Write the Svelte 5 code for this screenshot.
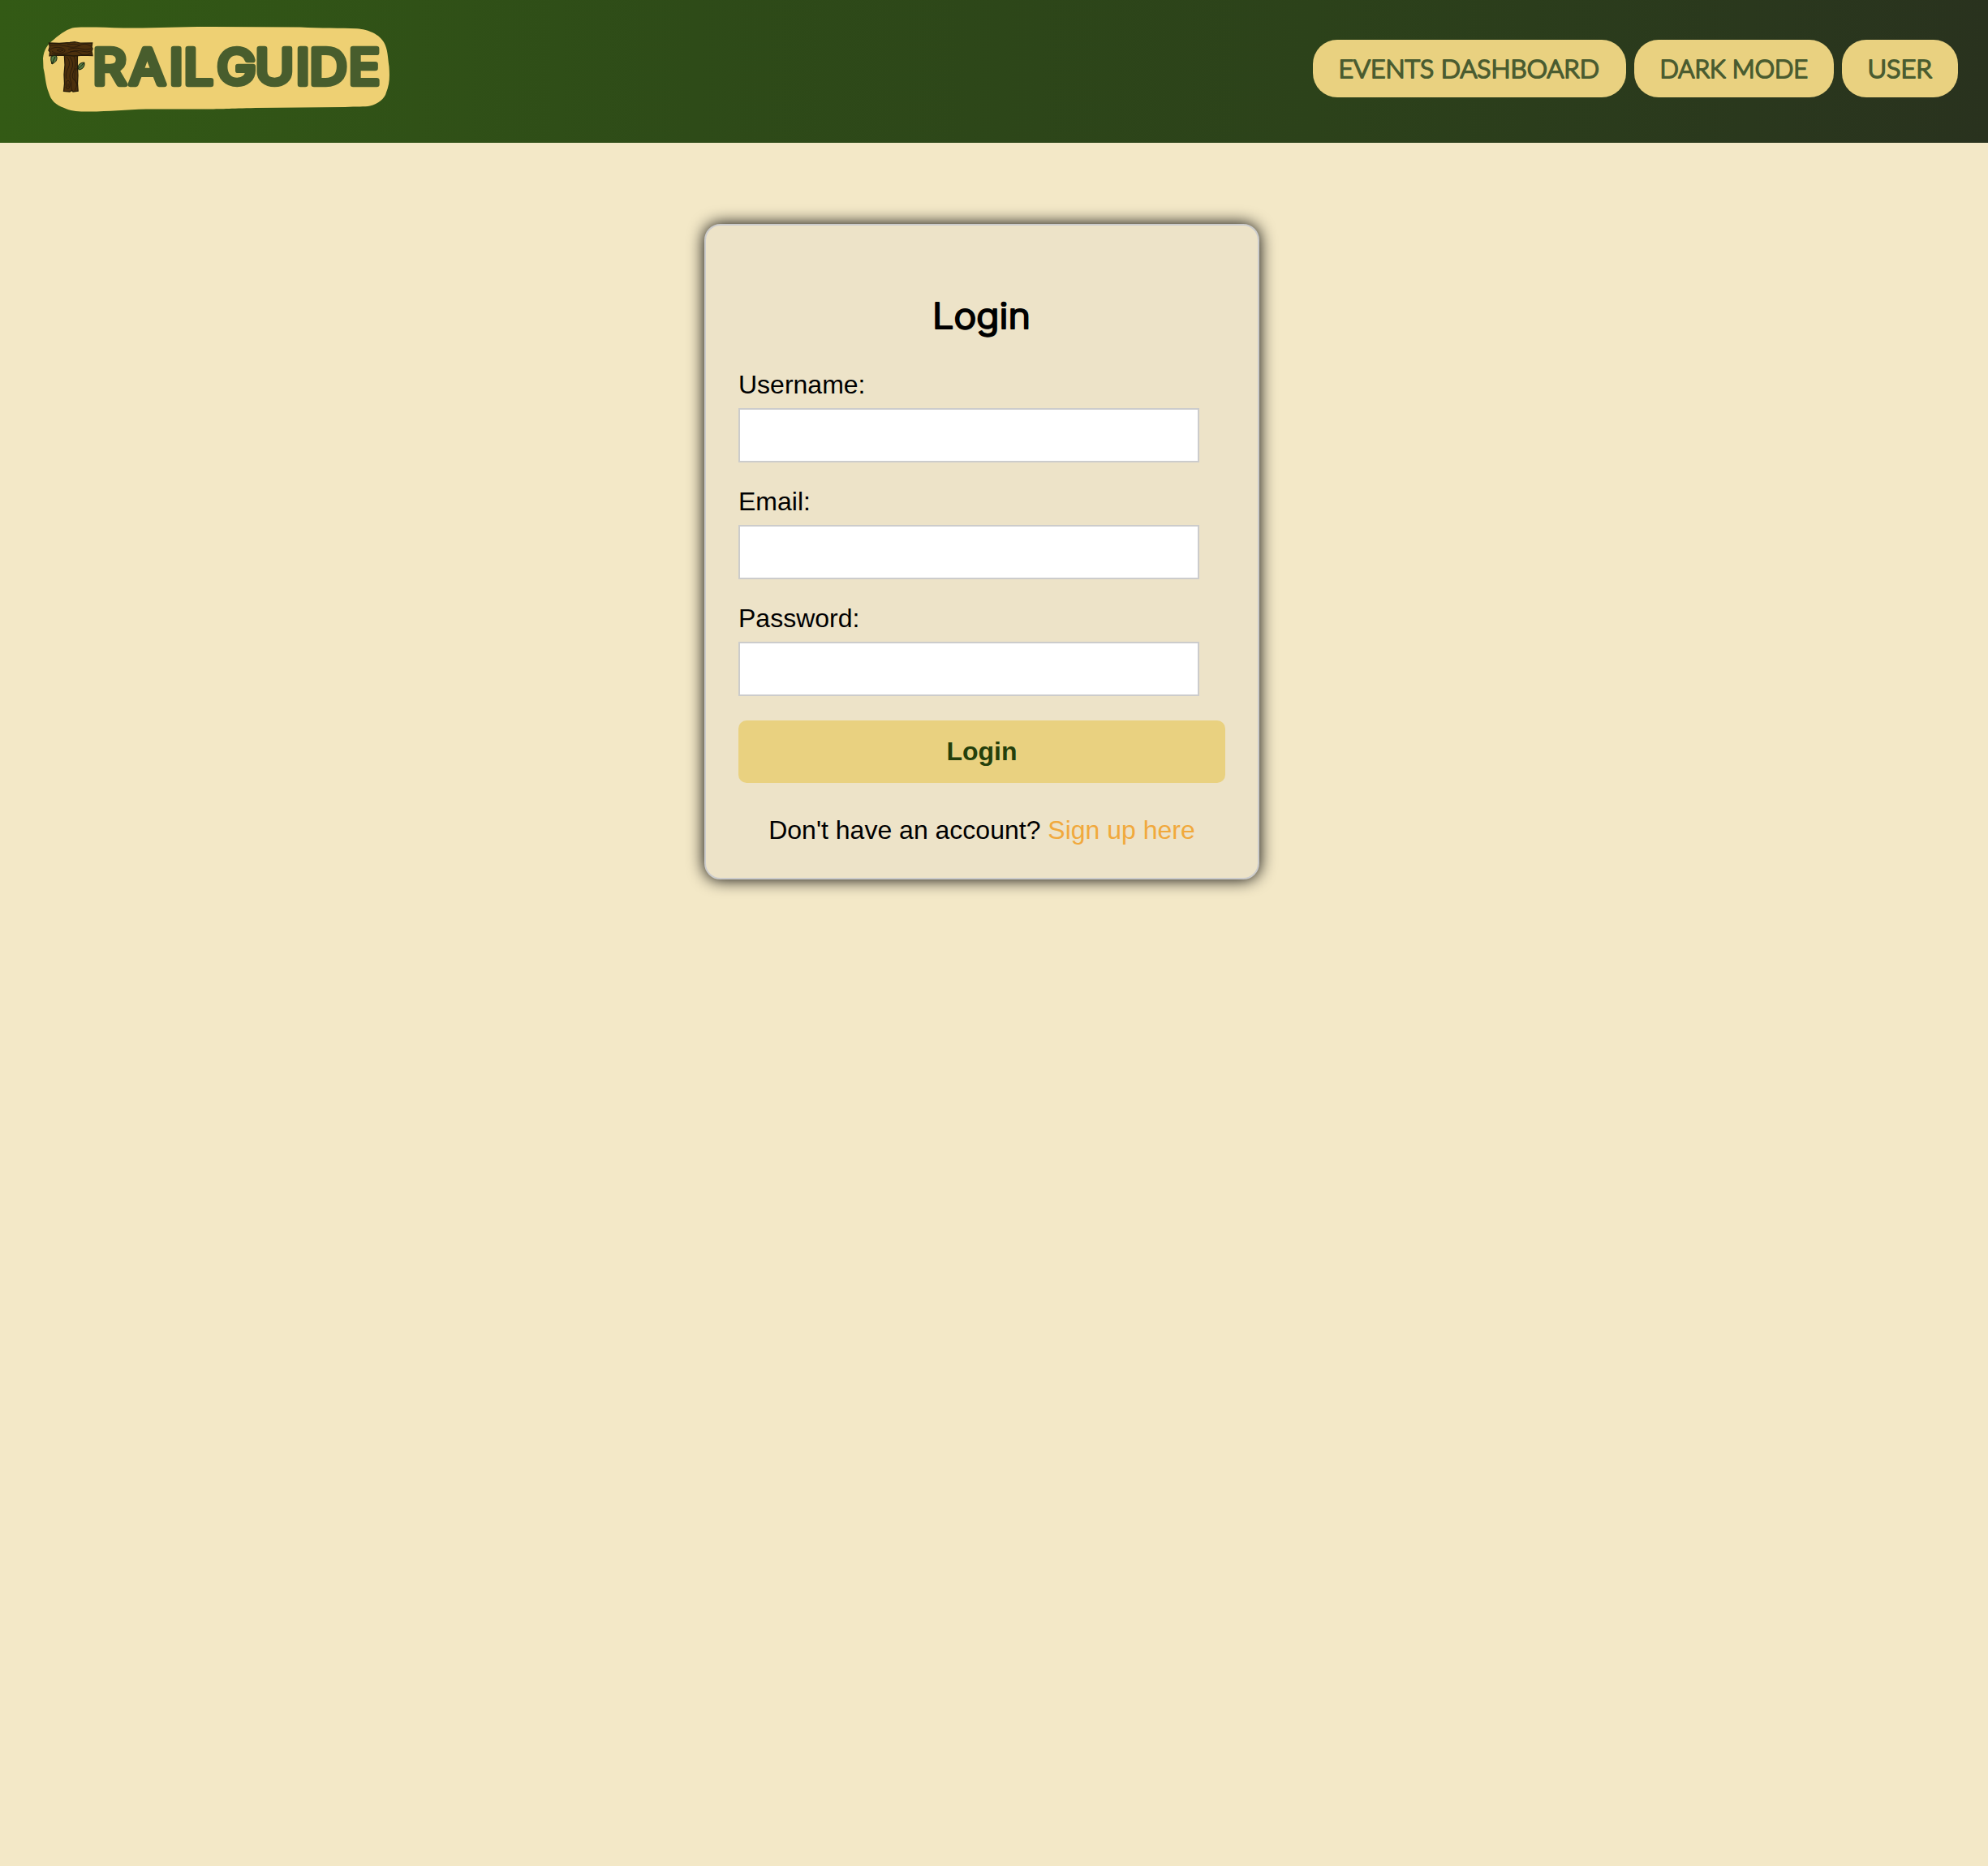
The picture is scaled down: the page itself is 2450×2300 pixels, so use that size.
<script>
  const links = [
    { label: 'EVENTS DASHBOARD', width: 386, start: 31.5, length: 321.5 },
    { label: 'DARK MODE', width: 246, start: 31.5, length: 182.5 },
    { label: 'USER', width: 143, start: 31.5, length: 79.500 }
  ];
  const fields = [
    { id: 'username', label: 'Username:', type: 'text' },
    { id: 'email', label: 'Email:', type: 'email' },
    { id: 'password', label: 'Password:', type: 'password' }
  ];
</script>

<div class="page">
  <header>
    <a class="logo" href="#home" aria-label="Trailguide">
      <svg width="430" height="108" viewBox="52 32 430 108">
        <path class="blob" d="M53 72C54 62 58 55 66 49C75 41 84 35 92 34C108 33 130 34 152 34.5C190 35 220 33 260 33L370 33.4C395 35 420 34 440 35.2C448 36 452 37 457 39.3C464 42 469 46 473 52C478 60 478 72 479.5 82C480.5 96 480 104 476 114C474 122 466 128 456 130.5C449 132 440 131 425 132L315 133C280 134 270 134.5 250 134.5L180 134.5C155 135 135 137.5 110 137.5C96 138 88 137 79 133C68 129 63 124 60 114C56 104 56 94 53.500 84Z" />
        <!-- wooden T with two leaves -->
        <g class="wood">
          <path d="M79.300 67H95.500L95.300 80L96 93L95.500 103L96.200 112.200L90 113L88.500 111.500L86 113L78.500 112.300L79.500 103L79 92L80 80Z" />
          <path d="M60.500 53L73 53.500L86 52.500L92 51.700L99 53.200L113.700 53L113 58L114 60L113 63L114 68.500L102 68L91 69L80 68L61 68.700L61.500 64L60 62L61.200 58Z" />
        </g>
        <g class="grain">
          <path d="M62 56Q73 54 82 57T98 56T112 57M83 55Q91 53 99 56M64 66Q74 69 84 65T99 66T112 65M84 61Q93 58 99 60T112 60M86 64Q94 61 101 63T112 63M62 61Q67 57 76 59Q84 62 77 65Q68 67 64 63M70 62Q74 59 78 62Q74 65 70 62" />
          <path d="M82 70Q88 76 84 84T82 97M86 70Q92 78 88 86T88 102Q87 108 89 112M91 69Q95 78 91 87T92 99T92 112M94 84Q90 93 94 103M82 108Q80 100 84 99Q88 102 85 109Q82 111 81 107M84 103V107" />
        </g>
        <path class="leaf" d="M63 70Q68 67 70 70Q71 76 64 79Q62 74 63 70ZM64 79Q66 74 68 70M96 83Q97 77 104 77Q105 84 98 86Q96 86 96 83ZM96 85Q100 82 103 78" />
        <text class="wordmark" transform="scale(1.08 1)" y="103.700" x="105.900 147.400 193 209.600 247.500 291.100 337.400 353.100 397.600">RAILGUIDE</text>
      </svg>
    </a>
    <nav>
      {#each links as link}
        <a class="pill" href="#nav">
          <svg width={link.width} height="71">
            <text x={link.start} y="46.900" textLength={link.length} lengthAdjust="spacingAndGlyphs">{link.label}</text>
          </svg>
        </a>
      {/each}
    </nav>
  </header>

  <main>
    <form class="card">
      <h2>
        <svg width="130" height="60">
          <text x="4" y="41.800" textLength="121" lengthAdjust="spacingAndGlyphs">Login</text>
        </svg>
      </h2>
      {#each fields as field}
        <div class="field">
          <label for={field.id}>{field.label}</label>
          <input id={field.id} type={field.type} />
        </div>
      {/each}
      <button type="button">Login</button>
      <p>Don't have an account? <a href="#signup">Sign up here</a></p>
    </form>
  </main>
</div>

<style>
  :global(body) {
    background: #f3e8c7;
  }
  .page {
    min-height: 2300px;
    background: #f3e8c7;
    color: #000;
    font: 32px/37px 'Liberation Sans', Arial, sans-serif;
  }
  header {
    box-sizing: border-box;
    height: 176px;
    padding: 32px 37px 0 52px;
    display: flex;
    justify-content: space-between;
    align-items: flex-start;
    background: linear-gradient(to right, #335a15, #2e4b18 35%, #2c421a 66%, #2a381d 88%, #29321e);
  }
  .logo,
  .logo svg,
  .pill svg {
    display: block;
  }
  .blob {
    fill: #eed073;
  }
  .wood path {
    fill: #4c300d;
    stroke: #251a08;
    stroke-width: 1.3;
  }
  .grain path {
    fill: none;
    stroke: #25180a;
    stroke-width: 0.8;
  }
  .leaf {
    fill: #547a42;
    stroke: #17200d;
    stroke-width: 1;
  }
  .wordmark {
    font: 400 60px Inter, sans-serif;
    fill: #485d2d;
    stroke: #485d2d;
    stroke-width: 6.4px;
    stroke-linejoin: round;
  }
  nav {
    display: flex;
    gap: 10px;
    padding-top: 17px;
  }
  .pill {
    height: 71px;
    border-radius: 30px;
    background: #e9d180;
    overflow: hidden;
  }
  .pill text {
    font: 300 30.500px Lato, sans-serif;
    fill: #4a5c30;
    stroke: #4a5c30;
    stroke-width: 2px;
    stroke-linejoin: round;
  }
  main {
    display: flex;
    padding: 100px 0 0 868px;
  }
  .card {
    box-sizing: border-box;
    width: 684px;
    height: 808px;
    padding: 85px 40px 0;
    border: 2px solid #ccc;
    border-radius: 20px;
    background: #ede3c8;
    box-shadow: 0 0 20px #000;
  }
  h2 {
    height: 60px;
    margin: 0 0 33px;
    display: flex;
    justify-content: center;
  }
  h2 text {
    font: 300 43.500px Inter, sans-serif;
    stroke: #000;
    stroke-width: 2.2px;
    stroke-linejoin: round;
  }
  .field {
    height: 144px;
    display: flex;
    flex-direction: column;
    align-items: flex-start;
  }
  label {
    height: 47px;
    line-height: 36px;
  }
  input {
    box-sizing: border-box;
    width: 568px;
    height: 67px;
    margin: 0;
    padding: 16px;
    border: 2px solid #ccc;
    border-radius: 0;
    background: #fff;
    font: inherit;
  }
  button {
    display: block;
    width: 600px;
    height: 77px;
    margin: 0;
    padding: 0;
    border: 0;
    border-radius: 10px;
    background: #e9d180;
    color: #243f0b;
    font: bold 32px 'Liberation Sans', Arial, sans-serif;
  }
  p {
    margin: 40px 0 0;
    text-align: center;
  }
  p a {
    color: #f1a93c;
    text-decoration: none;
  }
</style>
